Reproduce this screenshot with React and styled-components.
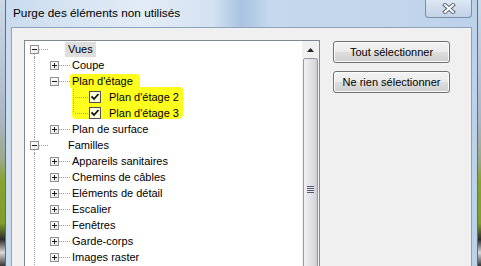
import React from 'react';
import styled, { createGlobalStyle, css } from 'styled-components';

const GlobalStyle = createGlobalStyle`
  html, body {
    margin: 0;
    padding: 0;
  }
  body {
    font-family: "Liberation Sans", Arial, sans-serif;
    background: #b9c7d6;
  }
`;

const Page = styled.div`
  width: 481px;
  height: 266px;
  overflow: hidden;
  background: linear-gradient(180deg, #cbd9e8 0, #aab6c2 45%, #9aa98a 60%, #86a332 68%, #7f9c2c 84%, #2b2b2b 90%, #d8d8d8 95%, #333 100%);
`;

const Window = styled.div`
  width: 473px;
  height: 300px;
  margin-left: 5px;
  box-sizing: border-box;
  border: 1px solid #5d6e82;
  border-top: none;
  background: linear-gradient(90deg, #c9dbee 0, #d5e3f2 12%, #e3ecf6 30%, #d3e1f1 44%, #a9c3e2 50%, #c6d8ed 56%, #c3d6ec 80%, #bcd1ea 100%);
  display: flex;
  flex-direction: column;
`;

const TitleBar = styled.div`
  height: 27px;
  flex-shrink: 0;
  display: flex;
  align-items: flex-start;
  justify-content: space-between;
  padding-left: 7px;
`;

const Title = styled.span`
  font-size: 11.8px;
  color: #000;
  margin-top: 6px;
  line-height: 14px;
`;

const CloseButton = styled.div`
  width: 47px;
  height: 18px;
  margin-right: 5px;
  box-sizing: border-box;
  border: 1px solid #7d8ea6;
  border-top: none;
  border-radius: 0 0 4px 4px;
  background: linear-gradient(180deg, #dde8f4 0, #cfdcec 50%, #c2d3e8 100%);
  display: flex;
  align-items: center;
  justify-content: center;
`;

const Client = styled.div`
  flex: 1;
  min-height: 0;
  margin: 0 5px;
  border: 1px solid #8ea3bb;
  border-bottom: none;
  background: #f0f0f0;
  display: flex;
  align-items: flex-start;
  gap: 13px;
  padding: 12px 0 0 12px;
`;

const TreeBox = styled.div`
  width: 296px;
  height: 300px;
  flex-shrink: 0;
  box-sizing: border-box;
  border: 1px solid #828790;
  background: #fff;
  display: flex;
`;

const Rows = styled.div`
  flex: 1;
  display: flex;
  flex-direction: column;
`;

const Row = styled.div`
  height: 16px;
  flex-shrink: 0;
  display: flex;
  align-items: center;
  padding-left: ${(p) => p.$indent || 0}px;
`;

const Children = styled.div`
  margin-left: 9px;
  padding-left: 15px;
  padding-bottom: ${(p) => (p.$open ? 4 : 0)}px;
  border-left: 1px dotted #a0a0a0;
  display: flex;
  flex-direction: column;
`;

const ExpanderCell = styled.span`
  position: relative;
  width: 9px;
  height: 16px;
  display: flex;
  align-items: center;
  flex-shrink: 0;

  ${(p) => (p.$tail === 'down' || p.$tail === 'both') && css`
    &::after {
      content: '';
      position: absolute;
      left: 4px;
      top: 13px;
      height: 3px;
      border-left: 1px dotted #a0a0a0;
    }
  `}
  ${(p) => p.$tail === 'both' && css`
    &::before {
      content: '';
      position: absolute;
      left: 4px;
      top: 0;
      height: 3px;
      border-left: 1px dotted #a0a0a0;
    }
  `}
`;

const ExpanderBox = styled.span`
  position: relative;
  width: 9px;
  height: 9px;
  box-sizing: border-box;
  border: 1px solid #919191;
  background: linear-gradient(135deg, #fff 0, #f4f4f4 60%, #e2e2e2 100%);

  &::before {
    content: '';
    position: absolute;
    left: 1px;
    top: 3px;
    width: 5px;
    height: 1px;
    background: #1e1e1e;
  }
  ${(p) => !p.$open && css`
    &::after {
      content: '';
      position: absolute;
      left: 3px;
      top: 1px;
      width: 1px;
      height: 5px;
      background: #1e1e1e;
    }
  `}
`;

const Dots = styled.span`
  width: ${(p) => p.$w}px;
  margin-right: ${(p) => p.$gap || 0}px;
  height: 0;
  border-top: 1px dotted #a0a0a0;
  flex-shrink: 0;
`;

const Label = styled.span`
  font-size: 11px;
  line-height: 15px;
  height: 15px;
  color: #000;
  white-space: nowrap;
  padding: 0 ${(p) => (p.$mark ? 7 : 3)}px 0 ${(p) => (p.$pl ?? 3)}px;
  background: ${(p) => (p.$selected ? '#dedede' : p.$mark ? '#ffff1e' : 'transparent')};
  border-radius: ${(p) => (p.$mark ? '3px' : '0')};
`;

const Marked = styled.div`
  margin: -2px 0 2px 22px;
  width: 111px;
  height: 32px;
  flex-shrink: 0;
  padding-top: 2px;
  box-sizing: border-box;
  background: #ffff1e;
  border-radius: 3px 3px 5px 4px;
  display: flex;
  flex-direction: column;
`;

const CheckBox = styled.span`
  width: 12px;
  height: 12px;
  box-sizing: border-box;
  border: 1px solid #4f4f4f;
  background: #fffde0;
  display: flex;
  align-items: center;
  justify-content: center;
  flex-shrink: 0;
  margin-right: 5px;
`;

const Scrollbar = styled.div`
  width: 17px;
  background: #f0f0f0;
  display: flex;
  flex-direction: column;
  align-items: center;
`;

const ArrowButton = styled.div`
  width: 17px;
  height: 17px;
  flex-shrink: 0;
  display: flex;
  align-items: center;
  justify-content: center;
`;

const Thumb = styled.div`
  width: 15px;
  height: 262px;
  flex-shrink: 0;
  box-sizing: border-box;
  border: 1px solid #9a9aa2;
  border-radius: 2px;
  background: linear-gradient(90deg, #f1f1f4 0, #e3e3e8 45%, #d6d6dd 85%, #c8c8d0 100%);
  display: flex;
  align-items: center;
  justify-content: center;
`;

const Grip = styled.span`
  width: 7px;
  height: 7px;
  background: repeating-linear-gradient(180deg, #555a66 0, #555a66 1px, #e8e8ee 1px, #e8e8ee 2px);
`;

const Buttons = styled.div`
  margin-top: 1px;
  display: flex;
  flex-direction: column;
  gap: 8px;
`;

const Button = styled.button`
  width: 117px;
  height: 22px;
  padding: 0;
  box-sizing: border-box;
  border: 1px solid #707070;
  border-radius: 3px;
  background: linear-gradient(180deg, #f3f3f3 0, #ebebeb 48%, #dddddd 52%, #cfcfcf 100%);
  box-shadow: inset 0 0 0 1px #fcfcfc;
  font-family: "Liberation Sans", Arial, sans-serif;
  font-size: 11px;
  color: #000;
`;

const Elbow = ({ last }) => (
  <svg width="16" height="16" style={{ flexShrink: 0, marginLeft: 1 }}>
    <line x1="0.5" y1="0" x2="0.5" y2={last ? 8 : 16} stroke="#a0a0a0" strokeDasharray="1 1" />
    <line x1="2" y1="8.5" x2="16" y2="8.5" stroke="#a0a0a0" strokeDasharray="1 1" />
  </svg>
);

const Check = () => (
  <CheckBox>
    <svg width="8" height="8" viewBox="0 0 8 8">
      <path d="M0.5 3.5 L3 6 L7.5 1" fill="none" stroke="#111" strokeWidth="1.8" />
    </svg>
  </CheckBox>
);

const CloseGlyph = () => (
  <svg width="14" height="11" viewBox="0 0 14 11">
    <path d="M3 2 L11 9 M11 2 L3 9" stroke="#5d6878" strokeWidth="4" strokeLinecap="square" />
    <path d="M3 2 L11 9 M11 2 L3 9" stroke="#fff" strokeWidth="2" strokeLinecap="square" />
  </svg>
);

const RootRow = ({ label, selected, tail }) => (
  <Row $indent={5}>
    <ExpanderCell $tail={tail}>
      <ExpanderBox $open />
    </ExpanderCell>
    <Dots $w={9} $gap={17} />
    <Label $selected={selected}>{label}</Label>
  </Row>
);

const ChildRow = ({ label, open, mark }) => (
  <Row>
    <ExpanderCell>
      <ExpanderBox $open={open} />
    </ExpanderCell>
    <Dots $w={11} />
    <Label $pl={2} $mark={mark}>{label}</Label>
  </Row>
);

const LeafRow = ({ label, last }) => (
  <Row>
    <Elbow last={last} />
    <Check />
    <Label>{label}</Label>
  </Row>
);

const familles = [
  'Appareils sanitaires',
  'Chemins de câbles',
  'Eléments de détail',
  'Escalier',
  'Fenêtres',
  'Garde-corps',
  'Images raster',
];

export default function App() {
  return (
    <>
      <GlobalStyle />
      <Page>
        <Window>
          <TitleBar>
            <Title>Purge des éléments non utilisés</Title>
            <CloseButton>
              <CloseGlyph />
            </CloseButton>
          </TitleBar>
          <Client>
            <TreeBox>
              <Rows>
                <RootRow label="Vues" selected tail="down" />
                <Children>
                  <ChildRow label="Coupe" />
                  <ChildRow label="Plan d'étage" open mark />
                  <Marked>
                    <LeafRow label="Plan d'étage 2" />
                    <LeafRow label="Plan d'étage 3" last />
                  </Marked>
                  <ChildRow label="Plan de surface" />
                </Children>
                <RootRow label="Familles" tail="both" />
                <Children $open>
                  {familles.map((f) => (
                    <ChildRow key={f} label={f} />
                  ))}
                </Children>
              </Rows>
              <Scrollbar>
                <ArrowButton>
                  <svg width="7" height="4" viewBox="0 0 7 4">
                    <path d="M0 4 L3.5 0 L7 4 Z" fill="#222" />
                  </svg>
                </ArrowButton>
                <Thumb>
                  <Grip />
                </Thumb>
              </Scrollbar>
            </TreeBox>
            <Buttons>
              <Button>Tout sélectionner</Button>
              <Button>Ne rien sélectionner</Button>
            </Buttons>
          </Client>
        </Window>
      </Page>
    </>
  );
}
